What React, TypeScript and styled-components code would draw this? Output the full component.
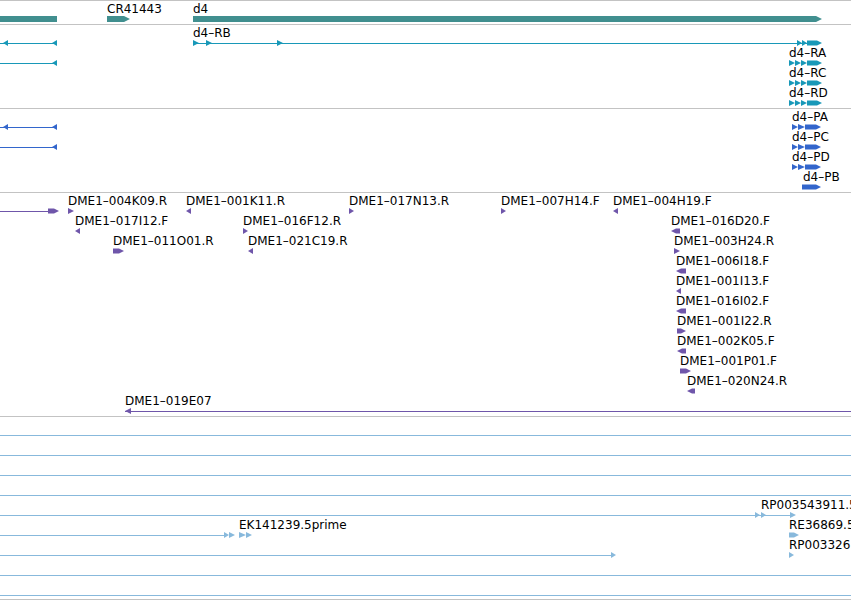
import React from "react";
import styled, { createGlobalStyle } from "styled-components";

type Kind = "tri" | "tip" | "bar";
type Block = [number, number, Kind];
type Feature = {
  dir: 1 | -1;
  line?: [number, number];
  blocks?: Block[];
  label?: string;
  lx?: number;
};
type TrackData = { color: string; barH: number; pad: number; rows: Feature[][] };

const GlobalStyle = createGlobalStyle`
  html, body {
    margin: 0;
    padding: 0;
    background: #ffffff;
    overflow: hidden;
  }
  body {
    font-family: "DejaVu Sans", Verdana, sans-serif;
  }
`;

const Browser = styled.div`
  width: 851px;
  height: 600px;
  overflow: hidden;
  display: flex;
  flex-direction: column;
  background: #ffffff;
`;

const Track = styled.section<{ $pad: number }>`
  border-top: 1px solid #c3c3c3;
  padding-bottom: ${(p) => p.$pad}px;
  display: flex;
  flex-direction: column;
  flex: none;
`;

const Row = styled.div`
  position: relative;
  height: 20px;
  flex: none;
`;

const Glyphs = styled.svg`
  position: absolute;
  left: 0;
  top: 14px;
  width: 851px;
  height: 8px;
  overflow: visible;
`;

const Label = styled.span`
  position: absolute;
  top: 1px;
  font-size: 12px;
  line-height: 14px;
  color: #000000;
  white-space: nowrap;
`;

// polygon for one block of a feature, drawn around the row's centre line
const shape = (a: number, b: number, kind: Kind, dir: number, h: number) => {
  const c = 4;
  const top = c - h;
  const btm = c + h;
  if (kind === "tri") {
    const t = c - 3;
    const d = c + 3;
    return dir > 0 ? `${a},${t} ${b},${c} ${a},${d}` : `${b},${t} ${a},${c} ${b},${d}`;
  }
  if (kind === "bar") return `${a},${top} ${b},${top} ${b},${btm} ${a},${btm}`;
  const k = Math.min(h * 2, b - a);
  return dir > 0
    ? `${a},${top} ${b - k},${top} ${b},${c} ${b - k},${btm} ${a},${btm}`
    : `${b},${top} ${a + k},${top} ${a},${c} ${a + k},${btm} ${b},${btm}`;
};

const FeatureRow = ({ features, color, barH }: { features: Feature[]; color: string; barH: number }) => (
  <Row>
    <Glyphs viewBox="0 0 851 8">
      {features.map((f, i) => (
        <g key={i} fill={color}>
          {f.line && (
            <line x1={f.line[0]} x2={f.line[1]} y1={4.5} y2={4.5} stroke={color} strokeWidth={1} shapeRendering="crispEdges" />
          )}
          {(f.blocks ?? []).map(([a, b, k], j) => (
            <polygon key={j} points={shape(a, b, k, f.dir, barH)} />
          ))}
        </g>
      ))}
    </Glyphs>
    {features
      .filter((f) => f.label)
      .map((f, i) => (
        <Label key={i} style={{ left: f.lx }}>
          {f.label}
        </Label>
      ))}
  </Row>
);

const tri = (a: number, b: number): Block => [a, b, "tri"];
const tip = (a: number, b: number): Block => [a, b, "tip"];
const bar = (a: number, b: number): Block => [a, b, "bar"];

const mark = (x: number, w: number, dir: 1 | -1, label: string): Feature => ({
  dir,
  blocks: [w > 6 ? tip(x, x + w) : tri(x, x + w)],
  label,
  lx: x,
});

const d4R = (label: string): Feature => ({
  dir: 1,
  blocks: [tri(789, 795), tri(795, 801), tri(801, 807), tip(807, 822)],
  label,
  lx: 789,
});

const d4P = (label: string): Feature => ({
  dir: 1,
  blocks: [tri(792, 798), tri(798, 805), tip(805, 821)],
  label,
  lx: 792,
});

const full: Feature = { dir: 1, line: [0, 851] };

const tracks: TrackData[] = [
  {
    color: "#418f8f",
    barH: 3,
    pad: 3,
    rows: [
      [
        { dir: 1, blocks: [bar(0, 57)] },
        { dir: 1, blocks: [tip(107, 130)], label: "CR41443", lx: 107 },
        { dir: 1, blocks: [tip(193, 822)], label: "d4", lx: 193 },
      ],
    ],
  },
  {
    color: "#1898b8",
    barH: 2.5,
    pad: 3,
    rows: [
      [
        { dir: -1, line: [0, 57], blocks: [tri(3, 8), tri(52, 57)] },
        {
          dir: 1,
          line: [193, 807],
          blocks: [tri(193, 199), tri(206, 212), tri(277, 283), tri(797, 802), tri(802, 807), tip(807, 822)],
          label: "d4–RB",
          lx: 193,
        },
      ],
      [{ dir: -1, line: [0, 57], blocks: [tri(52, 57)] }, d4R("d4–RA")],
      [d4R("d4–RC")],
      [d4R("d4–RD")],
    ],
  },
  {
    color: "#3366cc",
    barH: 2.5,
    pad: 3,
    rows: [
      [{ dir: -1, line: [0, 57], blocks: [tri(3, 8), tri(52, 57)] }, d4P("d4–PA")],
      [{ dir: -1, line: [0, 57], blocks: [tri(52, 57)] }, d4P("d4–PC")],
      [d4P("d4–PD")],
      [{ dir: 1, blocks: [bar(802, 808), tip(808, 821)], label: "d4–PB", lx: 803 }],
    ],
  },
  {
    color: "#6f56aa",
    barH: 2.5,
    pad: 3,
    rows: [
      [
        { dir: 1, line: [0, 50], blocks: [tip(48, 59)] },
        mark(68, 6, 1, "DME1–004K09.R"),
        mark(186, 5, -1, "DME1–001K11.R"),
        mark(349, 5, 1, "DME1–017N13.R"),
        mark(501, 5, 1, "DME1–007H14.F"),
        mark(613, 5, -1, "DME1–004H19.F"),
      ],
      [mark(75, 5, -1, "DME1–017I12.F"), mark(243, 5, 1, "DME1–016F12.R"), mark(671, 9, -1, "DME1–016D20.F")],
      [mark(113, 11, 1, "DME1–011O01.R"), mark(248, 5, -1, "DME1–021C19.R"), mark(674, 6, 1, "DME1–003H24.R")],
      [mark(676, 10, -1, "DME1–006I18.F")],
      [mark(676, 5, -1, "DME1–001I13.F")],
      [mark(676, 10, -1, "DME1–016I02.F")],
      [mark(677, 9, 1, "DME1–001I22.R")],
      [mark(677, 9, -1, "DME1–002K05.F")],
      [mark(680, 11, 1, "DME1–001P01.F")],
      [mark(687, 8, -1, "DME1–020N24.R")],
      [{ dir: -1, line: [125, 851], blocks: [tri(125, 131)], label: "DME1–019E07", lx: 125 }],
    ],
  },
  {
    color: "#88b9dc",
    barH: 2.5,
    pad: 2,
    rows: [
      [full],
      [full],
      [full],
      [full],
      [
        {
          dir: 1,
          line: [0, 794],
          blocks: [tri(755, 760), tri(761, 766), tri(790, 796)],
          label: "RP003543911.5prime",
          lx: 761,
        },
      ],
      [
        {
          dir: 1,
          line: [0, 226],
          blocks: [tri(224, 229), tri(229, 235), tri(239, 246), tri(246, 252)],
          label: "EK141239.5prime",
          lx: 239,
        },
        { dir: 1, blocks: [tip(789, 799)], label: "RE36869.5prime", lx: 789 },
      ],
      [
        { dir: 1, line: [0, 612], blocks: [tri(611, 616)] },
        { dir: 1, blocks: [tri(789, 794)], label: "RP003326.5prime", lx: 789 },
      ],
      [full],
      [full],
    ],
  },
];

export default function App() {
  return (
    <>
      <GlobalStyle />
      <Browser>
        {tracks.map((t, i) => (
          <Track key={i} $pad={t.pad}>
            {t.rows.map((r, j) => (
              <FeatureRow key={j} features={r} color={t.color} barH={t.barH} />
            ))}
          </Track>
        ))}
        <Track $pad={0} />
      </Browser>
    </>
  );
}
